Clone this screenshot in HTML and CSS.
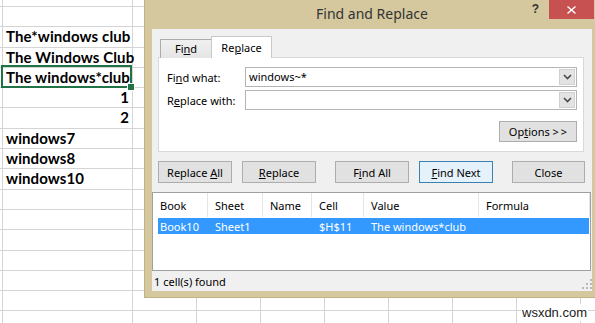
FILE: index.html
```html
<!DOCTYPE html>
<html>
<head>
<meta charset="utf-8">
<link rel="stylesheet" href="styles.css">
</head>
<body>
<div class="sheet">
  <div class="row top"><i class="edge"></i><span class="cell a"></span><span class="cell"></span><span class="cell"></span><span class="cell"></span><span class="cell"></span><span class="cell"></span><span class="cell"></span><span class="cell"></span></div>
  <div class="row"><i class="edge"></i><span class="cell a"></span><span class="cell"></span><span class="cell"></span><span class="cell"></span><span class="cell"></span><span class="cell"></span><span class="cell"></span><span class="cell"></span></div>
  <div class="row"><i class="edge"></i><span class="cell a">The*windows club</span><span class="cell"></span><span class="cell"></span><span class="cell"></span><span class="cell"></span><span class="cell"></span><span class="cell"></span><span class="cell"></span></div>
  <div class="row"><i class="edge"></i><span class="cell a">The Windows Club</span><span class="cell"></span><span class="cell"></span><span class="cell"></span><span class="cell"></span><span class="cell"></span><span class="cell"></span><span class="cell"></span></div>
  <div class="row"><i class="edge"></i><span class="cell a sel">The windows*club</span><span class="cell"></span><span class="cell"></span><span class="cell"></span><span class="cell"></span><span class="cell"></span><span class="cell"></span><span class="cell"></span></div>
  <div class="row"><i class="edge"></i><span class="cell a num">1</span><span class="cell"></span><span class="cell"></span><span class="cell"></span><span class="cell"></span><span class="cell"></span><span class="cell"></span><span class="cell"></span></div>
  <div class="row"><i class="edge"></i><span class="cell a num">2</span><span class="cell"></span><span class="cell"></span><span class="cell"></span><span class="cell"></span><span class="cell"></span><span class="cell"></span><span class="cell"></span></div>
  <div class="row"><i class="edge"></i><span class="cell a">windows7</span><span class="cell"></span><span class="cell"></span><span class="cell"></span><span class="cell"></span><span class="cell"></span><span class="cell"></span><span class="cell"></span></div>
  <div class="row"><i class="edge"></i><span class="cell a">windows8</span><span class="cell"></span><span class="cell"></span><span class="cell"></span><span class="cell"></span><span class="cell"></span><span class="cell"></span><span class="cell"></span></div>
  <div class="row"><i class="edge"></i><span class="cell a">windows10</span><span class="cell"></span><span class="cell"></span><span class="cell"></span><span class="cell"></span><span class="cell"></span><span class="cell"></span><span class="cell"></span></div>
  <div class="row"><i class="edge"></i><span class="cell a"></span><span class="cell"></span><span class="cell"></span><span class="cell"></span><span class="cell"></span><span class="cell"></span><span class="cell"></span><span class="cell"></span></div>
  <div class="row"><i class="edge"></i><span class="cell a"></span><span class="cell"></span><span class="cell"></span><span class="cell"></span><span class="cell"></span><span class="cell"></span><span class="cell"></span><span class="cell"></span></div>
  <div class="row"><i class="edge"></i><span class="cell a"></span><span class="cell"></span><span class="cell"></span><span class="cell"></span><span class="cell"></span><span class="cell"></span><span class="cell"></span><span class="cell"></span></div>
  <div class="row"><i class="edge"></i><span class="cell a"></span><span class="cell"></span><span class="cell"></span><span class="cell"></span><span class="cell"></span><span class="cell"></span><span class="cell"></span><span class="cell"></span></div>
  <div class="row"><i class="edge"></i><span class="cell a"></span><span class="cell"></span><span class="cell"></span><span class="cell"></span><span class="cell"></span><span class="cell"></span><span class="cell"></span><span class="cell"></span></div>
  <div class="row"><i class="edge"></i><span class="cell a"></span><span class="cell"></span><span class="cell"></span><span class="cell"></span><span class="cell"></span><span class="cell"></span><span class="cell"></span><span class="cell"></span></div>
  <div class="row"><i class="edge"></i><span class="cell a"></span><span class="cell"></span><span class="cell"></span><span class="cell"></span><span class="cell"></span><span class="cell"></span><span class="cell"></span><span class="cell"></span></div>
</div>

<div class="dialog">
  <div class="titlebar">
    <span></span>
    <span class="title">Find and Replace</span>
    <div class="controls">
      <span class="help">?</span>
      <span class="close"><svg width="9" height="8" viewBox="0 0 9 8"><path d="M0.5 0.5L8.5 7.5M8.5 0.5L0.5 7.5" stroke="#fff" stroke-width="1.4" fill="none"/></svg></span>
    </div>
  </div>
  <div class="body">
    <div class="tabs">
      <div class="tab"><span>Fi<u>n</u>d</span></div>
      <div class="tab active"><span>Re<u>p</u>lace</span></div>
    </div>
    <div class="panel">
      <div class="field">
        <span class="label">Fi<u>n</u>d what:</span>
        <div class="input"><span class="val">windows~*</span><span class="dd"><svg width="9" height="6" viewBox="0 0 9 6"><path d="M1 1L4.5 4.5L8 1" stroke="#4a4a4a" stroke-width="1.6" fill="none"/></svg></span></div>
      </div>
      <div class="field">
        <span class="label">R<u>e</u>place with:</span>
        <div class="input"><span class="val"></span><span class="dd"><svg width="9" height="6" viewBox="0 0 9 6"><path d="M1 1L4.5 4.5L8 1" stroke="#4a4a4a" stroke-width="1.6" fill="none"/></svg></span></div>
      </div>
      <div class="optrow"><span class="btn opt"><span>Op<u>t</u>ions <span class="gt">&gt;&gt;</span></span></span></div>
    </div>
    <div class="btnrow">
      <span class="btn"><span>Replace <u>A</u>ll</span></span>
      <span class="btn gap-s"><span><u>R</u>eplace</span></span>
      <span class="btn gap-l"><span>F<u>i</u>nd All</span></span>
      <span class="btn gap-s default"><span><u>F</u>ind Next</span></span>
      <span class="btn gap-l close-btn"><span>Close</span></span>
    </div>
    <div class="list">
      <div class="lhead">
        <span class="col c1">Book</span>
        <span class="col c2">Sheet</span>
        <span class="col c3">Name</span>
        <span class="col c4">Cell</span>
        <span class="col c5">Value</span>
        <span class="col c6">Formula</span>
      </div>
      <div class="lrow">
        <span class="col c1">Book10</span>
        <span class="col c2">Sheet1</span>
        <span class="col c3"></span>
        <span class="col c4">$H$11</span>
        <span class="col c5">The windows*club</span>
        <span class="col c6"></span>
      </div>
    </div>
    <div class="status">
      <span>1 cell(s) found</span>
      <svg class="grip" width="10" height="10" viewBox="0 0 10 10" fill="#b9b9b9"><rect x="8" y="0" width="2" height="2"/><rect x="4" y="4" width="2" height="2"/><rect x="8" y="4" width="2" height="2"/><rect x="0" y="8" width="2" height="2"/><rect x="4" y="8" width="2" height="2"/><rect x="8" y="8" width="2" height="2"/></svg>
    </div>
  </div>
</div>

<div class="watermark">wsxdn.com</div>
</body>
</html>
```

FILE: styles.css
```css
* { box-sizing: border-box; }
html, body { margin: 0; height: 100%; overflow: hidden; background: #fff; }
body { position: relative; }

/* spreadsheet */
.sheet { display: flex; flex-direction: column; font-family: "Lato", sans-serif; color: #000; }
.row { display: flex; flex: none; height: 20.3px; border-bottom: 1px solid #d4d4d4; }
.row.top { height: 7px; }
.edge { flex: none; width: 3px; border-right: 1px solid #d4d4d4; }
.cell {
  flex: none; width: 64px; border-right: 1px solid #d4d4d4;
  font-weight: 700; font-size: 15px; letter-spacing: 0.1px; line-height: 19px;
  padding: 0 2px 0 3px; white-space: nowrap;
}
.cell.a { width: 130px; }
.cell.num { text-align: right; padding-right: 3px; }
.cell.sel { position: relative; }
.cell.sel::before {
  content: ""; position: absolute; left: -2px; top: -3px; right: 0; bottom: -1px;
  border: 2px solid #217346;
}
.cell.sel::after {
  content: ""; position: absolute; right: -3px; bottom: -4px; width: 6px; height: 6px;
  background: #217346; border: 1px solid #fff;
}

/* dialog */
.dialog {
  position: absolute; left: 144px; top: 0; width: 456px; height: 298px;
  background: #d5c89e; border: 1px solid #c1b386; border-top: none;
  display: flex; flex-direction: column;
  font-family: "Noto Sans", sans-serif; font-size: 11px; color: #000;
}
.titlebar {
  flex: none; height: 29px; display: grid; grid-template-columns: 1fr auto 1fr;
}
.title { font-size: 14px; color: #333; line-height: 28px; }
.controls { justify-self: end; display: flex; align-items: flex-start; margin-right: 5px; }
.help { font-family: "Liberation Sans", sans-serif; font-weight: 700; font-size: 12px; color: #333; margin-top: 2px; margin-right: 10px; }
.close { width: 45px; height: 19px; background: #c75050; display: flex; align-items: center; justify-content: center; }

.body {
  flex: 1; margin: 0 7px 6px 7px; background: #f0f0f0;
  display: flex; flex-direction: column;
}
.tabs { display: flex; align-items: flex-end; height: 22px; margin: 7px 0 -1px 8px; position: relative; z-index: 1; }
.tab {
  width: 51px; height: 19px; border: 1px solid #acacac; border-right: none; border-bottom: none;
  background: linear-gradient(#f0f0f0, #e5e5e5); text-align: center; line-height: 18px;
}
.tab.active { width: 61px; height: 22px; background: #fff; border: 1px solid #c9c9c9; border-bottom: none; line-height: 21px; padding-bottom: 1px; }
.panel {
  flex: none; height: 95px; margin: 0 8px 0 6px; background: #fff; border: 1px solid #d9d9d9;
  padding: 9px 6px 0 8px; display: flex; flex-direction: column;
}
.field { display: flex; align-items: center; height: 20px; }
.field + .field { margin-top: 3px; }
.label { width: 78px; flex: none; }
.input { flex: 1; height: 20px; border: 1px solid #b4b4b4; background: #fff; display: flex; }
.val { flex: 1; padding-left: 3px; line-height: 17px; }
.dd { width: 16px; margin: 1px; background: #e3e3e3; border: 1px solid #d0d0d0; display: flex; align-items: center; justify-content: center; }
.optrow { display: flex; justify-content: flex-end; margin-top: 11px; }

.btn {
  display: flex; align-items: center; justify-content: center; flex: none;
  width: 74px; height: 22px; background: #e1e1e1; border: 1px solid #adadad; white-space: nowrap;
}
.btn.opt { width: 78px; height: 21px; }
.gt { letter-spacing: 2px; margin-right: -2px; }
.btnrow { display: flex; margin: 9px 0 0 6px; }
.gap-s { margin-left: 10px; }
.gap-l { margin-left: 19px; }
.btn.default { background: #e5f1fb; border-color: #3c7fb1; }
.btn.close-btn { width: 73px; }

.list { flex: none; height: 79px; margin: 9px 1px 0 0; background: #fff; border: 1px solid #a0a0a0; display: flex; flex-direction: column; }
.lhead { display: flex; height: 24px; align-items: stretch; }
.lhead .col { border-right: 1px solid #e5e5e5; }
.col { flex: none; padding-left: 7px; display: flex; align-items: center; white-space: nowrap; }
.c1 { width: 55px; }
.c2 { width: 55px; }
.c3 { width: 49px; }
.c4 { width: 52px; }
.c5 { width: 115px; }
.c6 { flex: 1; }
.lrow { display: flex; height: 16px; margin: 1px 1px 0 5px; background: #3399ff; color: #fff; }
.lrow .c1 { width: 50px; padding-left: 2px; }
.status { flex: 1; display: flex; align-items: center; justify-content: space-between; padding-left: 2px; }
.grip { align-self: flex-end; margin: 0 0 2px 0; }

.watermark {
  position: absolute; left: 521px; top: 304px; padding: 0 1px;
  background: #fff; font-family: "Liberation Sans", sans-serif; font-size: 13px; color: #222;
  line-height: 17px;
}
```
